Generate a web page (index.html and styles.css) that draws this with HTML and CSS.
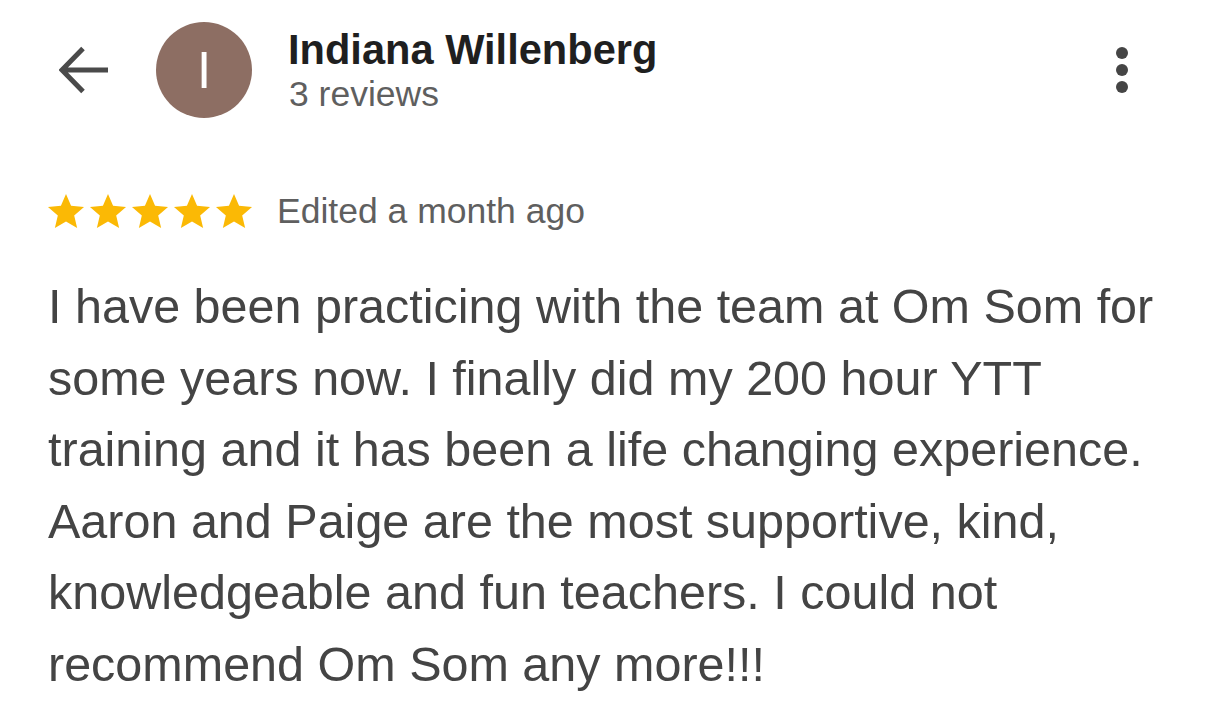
FILE: index.html
```html
<!DOCTYPE html>
<html>
<head>
<meta charset="utf-8">
<link rel="stylesheet" href="styles.css">
</head>
<body>
<div class="page">
  <header class="top">
    <button class="back" aria-label="Back">
      <svg width="50" height="48" viewBox="0 0 50 48"><path d="M49 24H4M24 2.5L3 24l21 21.5" fill="none" stroke="#4a4a4a" stroke-width="5"/></svg>
    </button>
    <div class="avatar">I</div>
    <div class="who">
      <div class="name">Indiana Willenberg</div>
      <div class="count">3 reviews</div>
    </div>
    <div class="more" aria-label="More">
      <span></span><span></span><span></span>
    </div>
  </header>
  <div class="meta">
    <div class="stars">
      <svg viewBox="0.9 1 22.2 21"><path d="M12 17.27L18.18 21l-1.64-7.03L22 9.24l-7.19-.61L12 2 9.19 8.63 2 9.24l5.46 4.73L5.82 21z"/></svg>
      <svg viewBox="0.9 1 22.2 21"><path d="M12 17.27L18.18 21l-1.64-7.03L22 9.24l-7.19-.61L12 2 9.19 8.63 2 9.24l5.46 4.73L5.82 21z"/></svg>
      <svg viewBox="0.9 1 22.2 21"><path d="M12 17.27L18.18 21l-1.64-7.03L22 9.24l-7.19-.61L12 2 9.19 8.63 2 9.24l5.46 4.73L5.82 21z"/></svg>
      <svg viewBox="0.9 1 22.2 21"><path d="M12 17.27L18.18 21l-1.64-7.03L22 9.24l-7.19-.61L12 2 9.19 8.63 2 9.24l5.46 4.73L5.82 21z"/></svg>
      <svg viewBox="0.9 1 22.2 21"><path d="M12 17.27L18.18 21l-1.64-7.03L22 9.24l-7.19-.61L12 2 9.19 8.63 2 9.24l5.46 4.73L5.82 21z"/></svg>
    </div>
    <span class="edited">Edited a month ago</span>
  </div>
  <p class="review">I have been practicing with the team at Om Som for some years now. I finally did my 200 hour YTT training and it has been a life changing experience. Aaron and Paige are the most supportive, kind, knowledgeable and fun teachers. I could not recommend Om Som any more!!!</p>
</div>
</body>
</html>
```
FILE: styles.css
```css
html, body {
  margin: 0;
  padding: 0;
  background: #fff;
}
body {
  font-family: "Liberation Sans", Arial, sans-serif;
  width: 1206px;
  height: 715px;
  overflow: hidden;
}
.page {
  padding: 0 38px 0 48px;
}
.top {
  display: flex;
  align-items: center;
  height: 140px;
  padding-left: 11px;
}
.back {
  border: 0;
  background: none;
  padding: 0;
  width: 50px;
  height: 48px;
  display: flex;
  align-items: center;
  justify-content: center;
  margin-right: 47px;
}
.back svg {
  display: block;
}
.avatar {
  width: 96px;
  height: 96px;
  border-radius: 50%;
  background: #8d6e63;
  color: #fff;
  font-size: 51px;
  line-height: 1;
  display: flex;
  align-items: center;
  justify-content: center;
  flex-shrink: 0;
}
.who {
  margin-left: 36px;
  flex: 1;
  display: flex;
  flex-direction: column;
  padding-top: 2px;
}
.name {
  font-size: 41.6px;
  font-weight: 700;
  color: #1f1f1f;
  line-height: 46px;
}
.count {
  font-size: 35.5px;
  color: #5f5f5f;
  line-height: 42px;
  padding-left: 1px;
}
.more {
  display: flex;
  flex-direction: column;
  gap: 5px;
  margin-right: 40px;
}
.more span {
  width: 12px;
  height: 12px;
  border-radius: 50%;
  background: #454545;
}
.meta {
  display: flex;
  align-items: center;
  height: 42px;
  margin-top: 50px;
}
.stars {
  display: flex;
  gap: 2px;
  margin-left: -2px;
}
.stars svg {
  width: 40px;
  height: 38px;
  fill: #fbb905;
  display: block;
}
.edited {
  margin-left: 23px;
  font-size: 35.5px;
  line-height: 42px;
  color: #5f5f5f;
}
.review {
  margin: 39px 0 0;
  font-size: 48.5px;
  line-height: 71.5px;
  color: #444;
}
```
